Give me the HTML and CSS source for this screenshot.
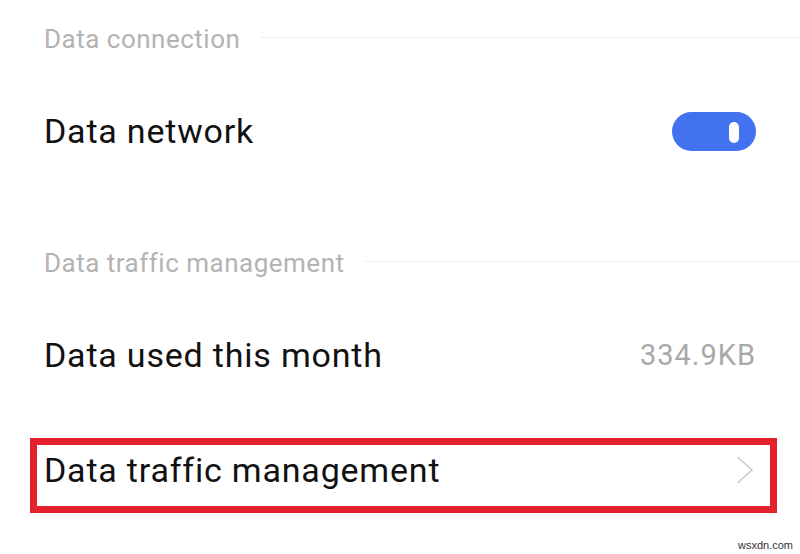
FILE: index.html
```html
<!DOCTYPE html>
<html lang="en">
<head>
<meta charset="utf-8">
<title>Data connection</title>
<link rel="stylesheet" href="styles.css">
</head>
<body>
<div class="page">
  <div class="group-title"><span class="group-label">Data connection</span><span class="rule"></span></div>
  <div class="row row-first">
    <span class="row-label">Data network</span>
    <span class="toggle"><span class="knob"></span></span>
  </div>
  <div class="group-title group-second"><span class="group-label">Data traffic management</span><span class="rule"></span></div>
  <div class="row row-usage">
    <span class="row-label">Data used this month</span>
    <span class="row-value">334.9KB</span>
  </div>
  <div class="highlight">
    <div class="row row-link">
      <span class="row-label">Data traffic management</span>
      <svg class="chevron" width="20" height="28" viewBox="0 0 20 28" aria-hidden="true"><path d="M1.5 1 L16 14 L1.5 27" fill="none" stroke="#c9c9c9" stroke-width="1.6" stroke-linejoin="miter"/></svg>
    </div>
  </div>
</div>
<span class="watermark">wsxdn.com</span>
</body>
</html>
```
FILE: styles.css
```css
html, body {
  margin: 0;
  padding: 0;
  background: #ffffff;
}
body {
  width: 800px;
  height: 554px;
  overflow: hidden;
  position: relative;
  font-family: Roboto, "Noto Sans", "Liberation Sans", sans-serif;
}
.page {
  padding: 24px 44px 0 44px;
}
.group-title {
  display: flex;
  align-items: center;
  height: 30px;
  margin-right: -44px;
  font-size: 26px;
  line-height: 30px;
  letter-spacing: 0.5px;
  color: #b3b3b3;
}
.group-label {
  white-space: nowrap;
}
.rule {
  flex: 1;
  height: 1px;
  background: #efefef;
  margin-left: 20px;
  margin-bottom: 4px;
}
.group-second {
  margin-top: 77px;
}
.row {
  display: flex;
  align-items: center;
  justify-content: space-between;
  height: 80px;
  font-size: 34px;
  line-height: 40px;
  letter-spacing: 0.8px;
  color: #111111;
}
.row-first {
  margin-top: 37px;
}
.row-usage {
  margin-top: 37px;
}
.row-value {
  font-size: 29px;
  letter-spacing: 1px;
  color: #a9a9a9;
}
.toggle {
  position: relative;
  display: block;
  width: 84px;
  height: 39px;
  border-radius: 20px;
  background: #4272ef;
}
.knob {
  position: absolute;
  right: 17px;
  top: 10px;
  width: 10px;
  height: 21px;
  border-radius: 5px;
  background: #ffffff;
}
.highlight {
  margin: 43px -21px 0 -14px;
  border: 7px solid #e4222c;
  padding: 5px 14px 16px 7px;
}
.row-link {
  height: 40px;
}
.chevron {
  display: block;
}
.watermark {
  position: absolute;
  right: 7px;
  bottom: 3px;
  font-family: "Liberation Sans", Arial, sans-serif;
  font-size: 11px;
  color: #333333;
}
```
